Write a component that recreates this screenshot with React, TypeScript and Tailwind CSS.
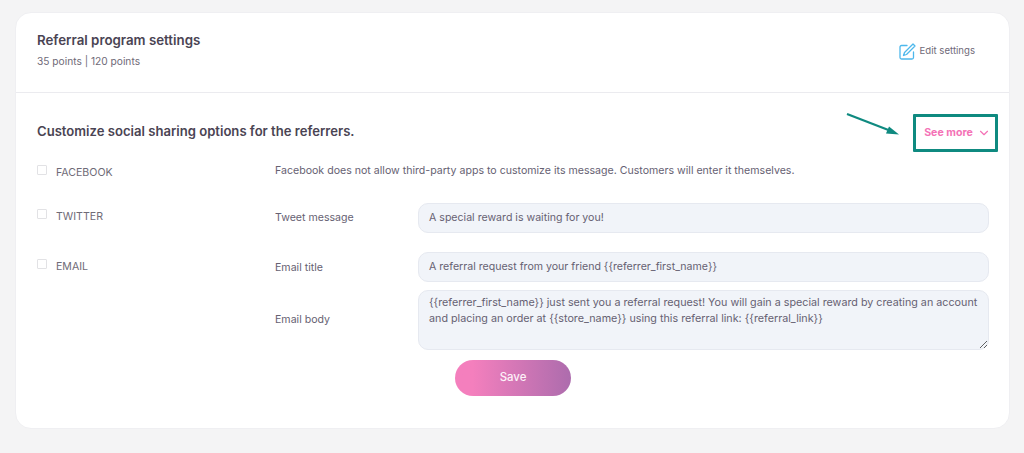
import { ChevronDown } from 'lucide-react'

const font = { fontFamily: '"Inter", "Liberation Sans", sans-serif' }

function CheckLabel({ label, className }: { label: string; className?: string }) {
  return (
    <div className={`flex items-center w-[238px] shrink-0 ${className ?? ''}`}>
      <span className="w-[10px] h-[10px] -mt-[4px] border border-[#e2e2e5] rounded-[1px] bg-white shrink-0" />
      <span className="ml-[9px] mt-[2px] text-[10.6px] leading-[16px] text-[#6f6b77]">{label}</span>
    </div>
  )
}

function FieldInput({ value }: { value: string }) {
  return (
    <div className="h-[30px] flex-1 flex items-center px-[10px] rounded-[10px] border border-[#e6e9f0] bg-[#f1f4f9] text-[10.6px] text-[#666172]">
      {value}
    </div>
  )
}

export default function App() {
  return (
    <div className="w-[1024px] h-[453px] overflow-hidden bg-[#f4f4f5] pt-[12px] pl-[15px]" style={font}>
      <div className="relative w-[995px] h-[417px] bg-white rounded-[16px] border border-[#efeff2]">
        {/* Header */}
        <div className="h-[80px] border-b border-[#ebebef] flex justify-between pl-[21px] pr-[34px]">
          <div>
            <div className="mt-[18px] text-[13.3px] leading-[18px] font-semibold text-[#4a4453]">
              Referral program settings
            </div>
            <div className="mt-[5px] text-[10.2px] leading-[15px] text-[#6f6a78]">35 points | 120 points</div>
          </div>
          <div className="flex items-center gap-[4px] mt-[8px] h-[60px]">
            <svg width="17" height="17" viewBox="0 0 17 17" fill="none" stroke="#4db8ec" strokeWidth="1.3" strokeLinecap="round" strokeLinejoin="round">
              <path d="M8 2.5H2.5A1.5 1.5 0 0 0 1 4v10.5A1.5 1.5 0 0 0 2.5 16H13a1.5 1.5 0 0 0 1.5-1.5V9" />
              <path d="M14 1l2 2-8.5 8.5-3 1 1-3z" />
            </svg>
            <span className="text-[9.6px] text-[#6f6a78]">Edit settings</span>
          </div>
        </div>

        {/* Section title */}
        <div className="flex items-center justify-between pl-[21px] pr-[11px] mt-[21px] h-[38px]">
          <div className="pb-[2px] text-[13.1px] font-semibold text-[#4a4453]">Customize social sharing options for the referrers.</div>
          <div className="w-[85px] h-[38px] pb-[1px] pl-[4px] border-[3px] border-[#0f8a80] rounded-[1px] flex items-center justify-center gap-[4px] text-[10.6px] font-bold text-[#f472b6]">
            See more
            <ChevronDown className="w-[14px] h-[14px]" strokeWidth={2} />
          </div>
        </div>

        {/* Arrow annotation */}
        <svg className="absolute left-[830px] top-[100px]" width="60" height="26" viewBox="0 0 60 26" fill="none">
          <path d="M1 1 L45 18" stroke="#0f8a80" strokeWidth="2.2" />
          <path d="M53 21.5 L43 13.5 L40 20.5 Z" fill="#0f8a80" />
        </svg>

        <div className="pl-[21px] pr-[20px]">
          <div className="flex items-center mt-[2px] h-[36px]">
            <CheckLabel label="FACEBOOK" />
            <div className="text-[10.6px] text-[#666172] -mt-[3px]">
              Facebook does not allow third-party apps to customize its message. Customers will enter it themselves.
            </div>
          </div>

          <div className="flex items-center mt-[13px]">
            <CheckLabel label="TWITTER" className="-mt-[5px]" />
            <div className="w-[143px] text-[10.6px] text-[#666172]">Tweet message</div>
            <FieldInput value="A special reward is waiting for you!" />
          </div>

          <div className="flex items-center mt-[19px]">
            <CheckLabel label="EMAIL" className="-mt-[2px]" />
            <div className="w-[143px] mt-[1px] text-[10.6px] text-[#666172]">Email title</div>
            <FieldInput value="A referral request from your friend {{referrer_first_name}}" />
          </div>

          <div className="flex items-center mt-[8px]">
            <div className="w-[238px] shrink-0" />
            <div className="w-[143px] -mt-[1px] text-[10.6px] text-[#666172]">Email body</div>
            <textarea
              readOnly
              className="flex-1 h-[60px] px-[10px] py-[4px] rounded-[10px] border border-[#e6e9f0] bg-[#f1f4f9] text-[10.75px] leading-[15.5px] text-[#666172] outline-none"
              value="{{referrer_first_name}} just sent you a referral request! You will gain a special reward by creating an account and placing an order at {{store_name}} using this referral link: {{referral_link}}"
            />
          </div>

          <div className="mt-[10px] ml-[418px] w-[116px] h-[36px] rounded-full bg-gradient-to-r from-[#f47fbd] from-15% to-[#ad6cad] flex items-center justify-center text-[11.4px] font-medium text-[#fdf2f8]">
            Save
          </div>
        </div>
      </div>
    </div>
  )
}
